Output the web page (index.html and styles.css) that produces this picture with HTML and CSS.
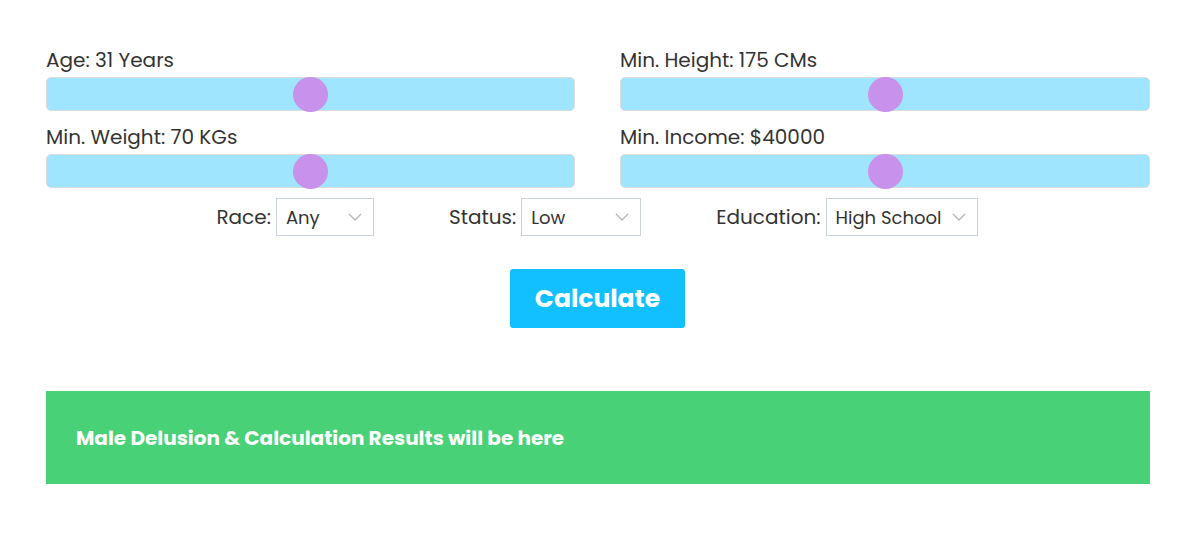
FILE: index.html
```html
<!DOCTYPE html>
<html lang="en">
<head>
    <meta charset="UTF-8">
    <meta name="viewport" content="width=device-width, initial-scale=1.0">
    <title>Male Delusion Calculator</title>
    <link rel="stylesheet" href="styles.css">
</head>
<body>
    <div class="calc">
        <div class="sliders">
            <div class="slider-item">
                <label for="age">Age: <span id="ageVal">31</span> Years</label>
                <input type="range" id="age" min="18" max="44" value="31">
            </div>
            <div class="slider-item">
                <label for="height">Min. Height: <span id="heightVal">175</span> CMs</label>
                <input type="range" id="height" min="150" max="200" value="175">
            </div>
            <div class="slider-item">
                <label for="weight">Min. Weight: <span id="weightVal">70</span> KGs</label>
                <input type="range" id="weight" min="40" max="100" value="70">
            </div>
            <div class="slider-item">
                <label for="income">Min. Income: $<span id="incomeVal">40000</span></label>
                <input type="range" id="income" min="0" max="80000" step="1000" value="40000">
            </div>
        </div>
        <div class="selects">
            <div class="select-item">
                <label for="race">Race:</label>
                <select id="race" class="race">
                    <option>Any</option>
                    <option>White</option>
                    <option>Black</option>
                    <option>Asian</option>
                </select>
            </div>
            <div class="select-item">
                <label for="status">Status:</label>
                <select id="status" class="status">
                    <option>Low</option>
                    <option>Medium</option>
                    <option>High</option>
                </select>
            </div>
            <div class="select-item">
                <label for="education">Education:</label>
                <select id="education" class="education">
                    <option>High School</option>
                    <option>Bachelor</option>
                    <option>Master</option>
                </select>
            </div>
        </div>
        <div class="btn-row">
            <button class="calc-btn" id="calcBtn">Calculate</button>
        </div>
        <div class="result" id="result">Male Delusion &amp; Calculation Results will be here</div>
    </div>
    <script>
        ['age', 'height', 'weight', 'income'].forEach(id => {
            const input = document.getElementById(id);
            input.addEventListener('input', () => {
                document.getElementById(id + 'Val').textContent = input.value;
            });
        });
    </script>
</body>
</html>
```

FILE: styles.css
```css
body {
    margin: 0;
    font-family: Poppins, "Open Sans", "Noto Sans", sans-serif;
    color: #333;
    background: white;
}
.calc {
    margin: 0 48px 0 46px;
    padding-top: 47px;
}
.sliders {
    display: grid;
    grid-template-columns: 529px 1fr;
    column-gap: 45px;
    row-gap: 13px;
}
.slider-item label {
    display: block;
    font-size: 20px;
    line-height: 27px;
    margin-bottom: 3px;
}
.slider-item input[type=range] {
    -webkit-appearance: none;
    appearance: none;
    display: block;
    width: 100%;
    height: 34px;
    margin: 0;
    background: #9ee5fd;
    border: 1px solid #dcdcdc;
    border-radius: 5px;
    outline: none;
    box-sizing: border-box;
}
.slider-item input[type=range]::-webkit-slider-thumb {
    -webkit-appearance: none;
    width: 35px;
    height: 35px;
    border-radius: 50%;
    background: #c891ec;
    cursor: pointer;
}
.selects {
    display: flex;
    justify-content: center;
    gap: 75px;
    margin-top: 10px;
    padding-right: 2px;
}
.select-item {
    display: flex;
    align-items: center;
    gap: 5px;
}
.select-item label {
    font-size: 20px;
}
.select-item select {
    -webkit-appearance: none;
    appearance: none;
    height: 38px;
    padding: 0 28px 0 9px;
    font-family: inherit;
    font-size: 18px;
    color: #333;
    background: white url("data:image/svg+xml;utf8,<svg xmlns='http://www.w3.org/2000/svg' width='14' height='8' viewBox='0 0 14 8'><path d='M1 1l6 6 6-6' fill='none' stroke='%23b5b5b5' stroke-width='1.3'/></svg>") no-repeat right 11px center;
    border: 1px solid #c8d3de;
    border-radius: 0;
    box-sizing: border-box;
}
.select-item select.race {
    width: 98px;
}
.select-item select.status {
    width: 120px;
}
.select-item select.education {
    width: 152px;
}
.btn-row {
    display: flex;
    justify-content: center;
    margin-top: 33px;
    padding-right: 1px;
}
.calc-btn {
    width: 175px;
    height: 59px;
    border: none;
    border-radius: 3px;
    background: #12bfff;
    color: white;
    font-family: inherit;
    font-size: 25px;
    font-weight: 700;
    cursor: pointer;
}
.result {
    margin-top: 63px;
    height: 93px;
    padding: 0 30px;
    display: flex;
    align-items: center;
    background: #48d176;
    color: white;
    font-size: 20px;
    font-weight: 700;
    box-sizing: border-box;
}
```
